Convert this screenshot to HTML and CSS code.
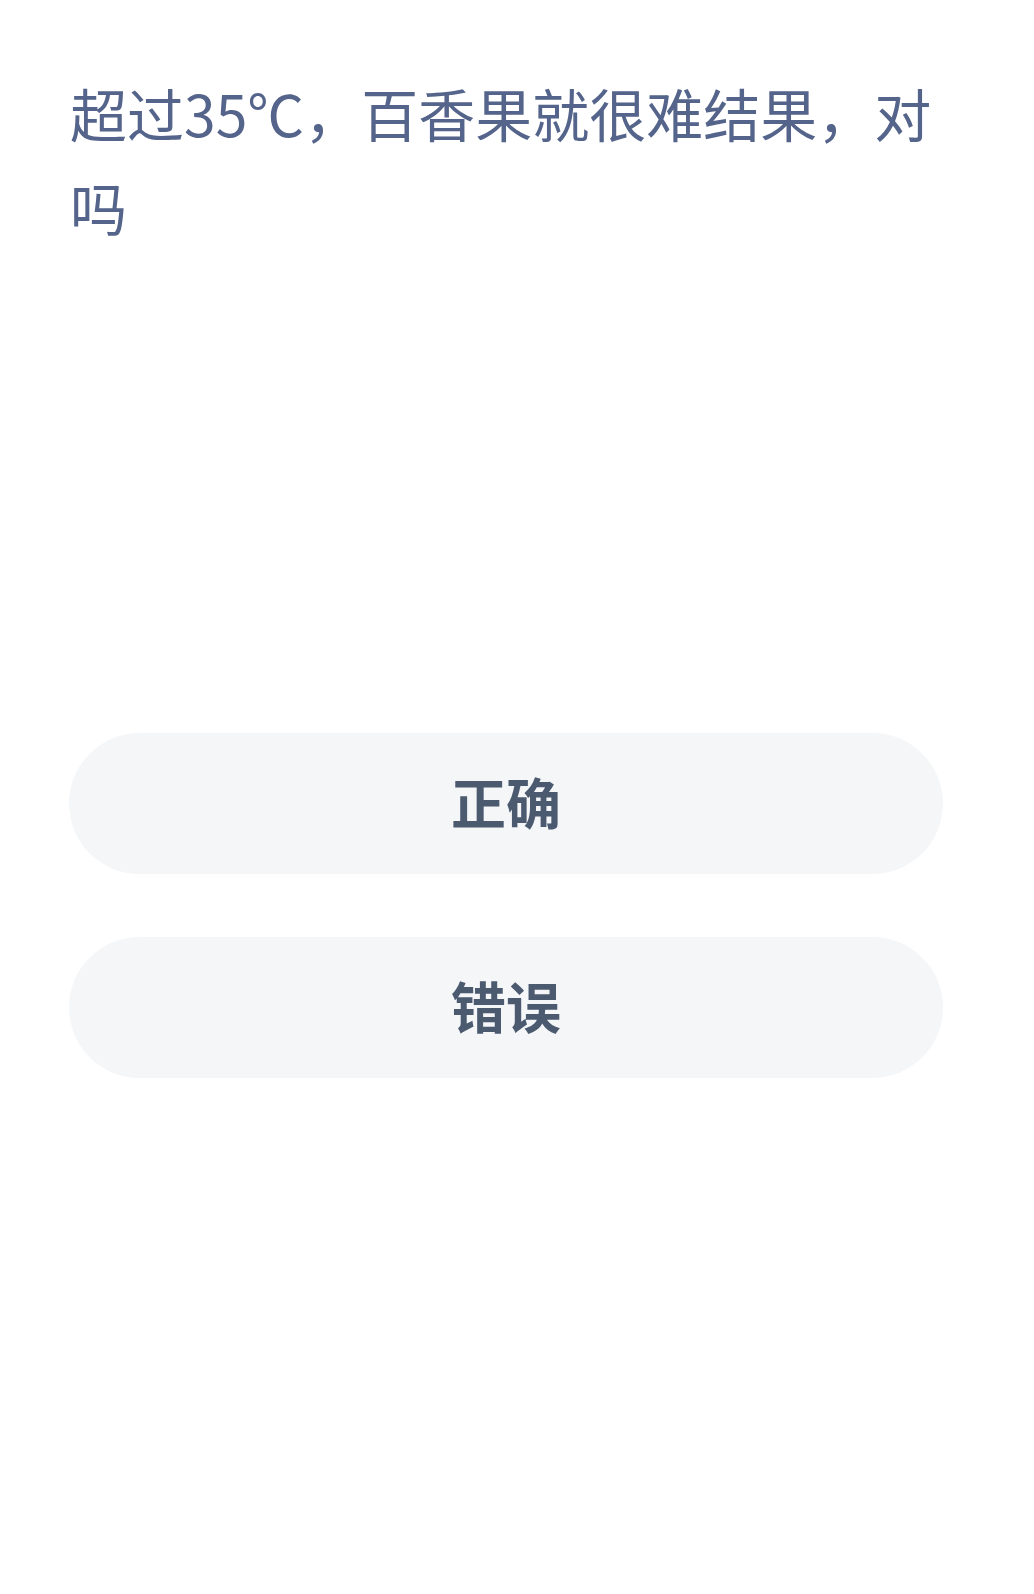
FILE: index.html
```html
<!DOCTYPE html>
<html lang="zh-CN">
<head>
<meta charset="UTF-8">
<meta name="viewport" content="width=device-width, initial-scale=1.0">
<title>答题</title>
<link rel="stylesheet" href="styles.css">
</head>
<body>
    <div class="quiz">
        <div class="question">超过35℃，百香果就很难结果，对吗</div>
        <div class="options">
            <div class="option">正确</div>
            <div class="option">错误</div>
        </div>
    </div>
</body>
</html>
```

FILE: styles.css
```css
body {
    font-family: "Noto Sans CJK SC", "Noto Sans", sans-serif;
    background-color: #ffffff;
    margin: 0;
}
.quiz {
    padding: 65px 91px 0 70px;
}
.question {
    font-size: 57px;
    line-height: 94px;
    color: #55648b;
    margin-right: -30px;
}
.options {
    margin-top: 480px;
    margin-left: -1px;
    display: flex;
    flex-direction: column;
    gap: 63px;
}
.option {
    height: 141px;
    box-sizing: border-box;
    padding-bottom: 8px;
    border-radius: 71px;
    background-color: #f4f6f8;
    color: #4c5a70;
    font-size: 55px;
    font-weight: bold;
    display: flex;
    align-items: center;
    justify-content: center;
}
```
